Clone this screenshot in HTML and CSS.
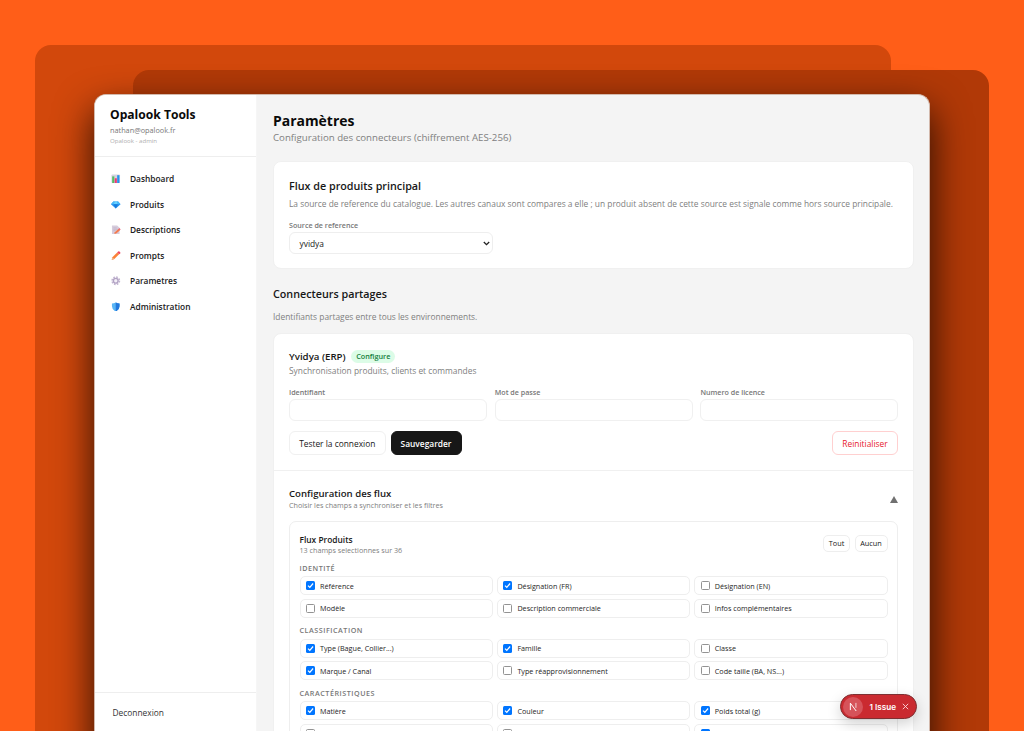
FILE: index.html
```html
<!DOCTYPE html>
<html lang="fr">
<head>
<meta charset="utf-8">
<title>Opalook Tools</title>
<link rel="stylesheet" href="styles.css">
</head>
<body>
<div class="stage">
  <div class="layer layer-back"></div>
  <div class="layer layer-mid"></div>
  <div class="window">
    <aside class="sidebar">
      <header class="brand">
        <div class="brand-name"><span>Opalook Tools</span></div>
        <div class="brand-mail"><span>nathan@opalook.fr</span></div>
        <div class="brand-role"><span>Opalook - admin</span></div>
      </header>
      <nav class="nav">
        <a class="nav-item"><svg class="emoji" viewBox="0 0 20 20"><rect x="1" y="1" width="18" height="18" rx="2" fill="#d5d3e0"/><rect x="2.5" y="5" width="4.5" height="14" fill="#58bd63"/><rect x="7.8" y="9" width="4.5" height="10" fill="#ec3975"/><rect x="13" y="2.5" width="4.8" height="16.5" fill="#2692ed"/></svg><span>Dashboard</span></a>
        <a class="nav-item"><svg class="emoji" viewBox="0 0 20 20"><path d="M5 3h10l5 6-10 9L0 9z" fill="#2491ee"/><path d="M5 3 0 9h5.5L8 3zM12 3l2.500 6H20l-5-6z" fill="#47b9fb"/><path d="M8 3h4l2.500 6h-9z" fill="#65d2ff"/><path d="m5.500 9 4.500 9 4.500-9z" fill="#167bdc"/></svg><span>Produits</span></a>
        <a class="nav-item"><svg class="emoji" viewBox="0 0 20 20"><path d="M2 1h11l5 5v13H2z" fill="#d6ccdc"/><path d="M5 6h7M5 9h9M5 12h5" stroke="#b9acc2" stroke-width="1.200"/><path d="m8 15 8-7 3 3-8 7-4 1z" fill="#f47b50"/><path d="m16 8 3 3 1-2-2-2z" fill="#e73e5d"/></svg><span>Descriptions</span></a>
        <a class="nav-item"><svg class="emoji" viewBox="0 0 20 20"><path d="m3 13 10-10 4 4L7 17l-5 2z" fill="#fb8238"/><path d="m13 3 2-2q2-1 4 1t0 4l-2 1z" fill="#ee4863"/><path d="m3 13-2 6 6-2z" fill="#efb98d"/></svg><span>Prompts</span></a>
        <a class="nav-item"><svg class="emoji" viewBox="0 0 20 20"><circle cx="10" cy="10" r="7.800" fill="none" stroke="#c1b4d0" stroke-width="3.200" stroke-dasharray="3.500 2.627"/><circle cx="10" cy="10" r="5" fill="#f3eff7" stroke="#b2a3c4" stroke-width="3"/></svg><span>Parametres</span></a>
        <a class="nav-item"><svg class="emoji" viewBox="0 0 20 20"><path d="M10 1q4 2 8 2v6q0 7-8 11-8-4-8-11V3q4 0 8-2z" fill="#59b5f5"/><path d="M10 1q4 2 8 2v6q0 7-8 11z" fill="#2378dc"/></svg><span>Administration</span></a>
      </nav>
      <footer class="logout"><span>Deconnexion</span></footer>
    </aside>
    <main class="main">
      <h1 class="title"><span>Paramètres</span></h1>
      <p class="subtitle"><span>Configuration des connecteurs (chiffrement AES-256)</span></p>

      <section class="card source-card">
        <h2 class="h2"><span>Flux de produits principal</span></h2>
        <p class="source-text"><span>La source de reference du catalogue. Les autres canaux sont compares a elle ; un produit absent de cette source est signale comme hors source principale.</span></p>
        <div class="label"><span>Source de reference</span></div>
        <div class="select"><span>yvidya</span><svg class="chevron" viewBox="0 0 7 5"><path d="m.8 1 2.700 2.700L6.200 1" fill="none" stroke="#222" stroke-width="1.300"/></svg></div>
      </section>

      <h2 class="h2 shared-title"><span>Connecteurs partages</span></h2>
      <p class="shared-text"><span>Identifiants partages entre tous les environnements.</span></p>

      <section class="card connector">
        <div class="connector-body">
          <div class="connector-head"><h3 class="h3"><span>Yvidya (ERP)</span></h3><span class="badge"><span>Configure</span></span></div>
          <p class="connector-text"><span>Synchronisation produits, clients et commandes</span></p>
          <div class="fields">
            <div><div class="label"><span>Identifiant</span></div><div class="input"></div></div>
            <div><div class="label"><span>Mot de passe</span></div><div class="input"></div></div>
            <div><div class="label"><span>Numero de licence</span></div><div class="input"></div></div>
          </div>
          <div class="actions">
            <div class="btn btn-test"><span>Tester la connexion</span></div>
            <div class="btn btn-save"><span>Sauvegarder</span></div>
            <div class="btn btn-reset"><span>Reinitialiser</span></div>
          </div>
        </div>
        <div class="flux">
          <div class="flux-head">
            <div><h3 class="h3"><span>Configuration des flux</span></h3><p class="small"><span>Choisir les champs a synchroniser et les filtres</span></p></div>
            <svg class="triangle" viewBox="0 0 8 7"><path d="M4 0l4 7H0z" fill="#707070"/></svg>
          </div>
          <div class="panel">
            <div class="panel-head">
              <div><h4 class="h4"><span>Flux Produits</span></h4><p class="small count"><span>13 champs selectionnes sur 36</span></p></div>
              <div class="mini-group"><div class="mini mini-all"><span>Tout</span></div><div class="mini mini-none"><span>Aucun</span></div></div>
            </div>
            <div class="group-title g1"><span>IDENTITÉ</span></div>
            <div class="grid">
              <div class="opt"><i class="box on"><svg viewBox="0 0 9 9"><path d="m2 4.600 1.800 1.800L7.100 2.500"/></svg></i><span>Référence</span></div>
              <div class="opt"><i class="box on"><svg viewBox="0 0 9 9"><path d="m2 4.600 1.800 1.800L7.100 2.500"/></svg></i><span>Désignation (FR)</span></div>
              <div class="opt"><i class="box"></i><span>Désignation (EN)</span></div>
              <div class="opt"><i class="box"></i><span>Modèle</span></div>
              <div class="opt"><i class="box"></i><span>Description commerciale</span></div>
              <div class="opt"><i class="box"></i><span>Infos complémentaires</span></div>
            </div>
            <div class="group-title g2"><span>CLASSIFICATION</span></div>
            <div class="grid">
              <div class="opt"><i class="box on"><svg viewBox="0 0 9 9"><path d="m2 4.600 1.800 1.800L7.100 2.500"/></svg></i><span>Type (Bague, Collier...)</span></div>
              <div class="opt"><i class="box on"><svg viewBox="0 0 9 9"><path d="m2 4.600 1.800 1.800L7.100 2.500"/></svg></i><span>Famille</span></div>
              <div class="opt"><i class="box"></i><span>Classe</span></div>
              <div class="opt"><i class="box on"><svg viewBox="0 0 9 9"><path d="m2 4.600 1.800 1.800L7.100 2.500"/></svg></i><span>Marque / Canal</span></div>
              <div class="opt"><i class="box"></i><span>Type réapprovisionnement</span></div>
              <div class="opt"><i class="box"></i><span>Code taille (BA, NS...)</span></div>
            </div>
            <div class="group-title g3"><span>CARACTÉRISTIQUES</span></div>
            <div class="grid">
              <div class="opt"><i class="box on"><svg viewBox="0 0 9 9"><path d="m2 4.600 1.800 1.800L7.100 2.500"/></svg></i><span>Matière</span></div>
              <div class="opt"><i class="box on"><svg viewBox="0 0 9 9"><path d="m2 4.600 1.800 1.800L7.100 2.500"/></svg></i><span>Couleur</span></div>
              <div class="opt"><i class="box on"><svg viewBox="0 0 9 9"><path d="m2 4.600 1.800 1.800L7.100 2.500"/></svg></i><span>Poids total (g)</span></div>
              <div class="opt"><i class="box"></i></div>
              <div class="opt"><i class="box"></i></div>
              <div class="opt"><i class="box on"></i></div>
            </div>
          </div>
        </div>
      </section>
    </main>
  </div>
  <div class="issue">
    <div class="issue-logo"><svg viewBox="0 0 10 10"><path d="M1.500 9V1.300L8 10" fill="none" stroke="#fff" stroke-width="1.100"/><path d="M7.700 1v5.500" stroke="#fff" stroke-width="1.100" opacity=".75"/></svg></div>
    <span class="issue-text">1 Issue</span>
    <svg class="issue-close" viewBox="0 0 7 7"><path d="m.8.8 5.400 5.400M6.200.8.8 6.200" stroke="#fbdadd" stroke-width=".9"/></svg>
  </div>
</div>
</body>
</html>
```
FILE: styles.css
```css
* { box-sizing: border-box; }
body { margin: 0; font-family: "Open Sans", "Noto Sans", sans-serif; color: #171717; }
h1, h2, h3, h4, p { margin: 0; }
span { white-space: nowrap; }

.stage { position: relative; width: 1024px; height: 731px; overflow: hidden; background: #ff5e18; padding: 94px 94px 0 94px; }
.layer { position: absolute; border-radius: 16px 16px 0 0; }
.layer-back { left: 35px; top: 45px; width: 856px; height: 700px; background: #d2480c; }
.layer-mid { left: 133px; top: 70px; width: 856px; height: 680px; background: #b13907; }

.window { position: relative; display: flex; width: 836px; height: 760px; border-radius: 12px 12px 0 0; overflow: hidden; background: #f4f4f4; border: 1px solid #d3b9ac; border-bottom: 0; box-shadow: 0 16px 38px rgba(0, 0, 0, .82); }

/* Sidebar */
.sidebar { width: 162px; height: 636px; flex: none; background: #fff; border-right: 1px solid #f6f6f6; display: flex; flex-direction: column; }
.brand { height: 62px; padding: 11px 0 0 15px; border-bottom: 1px solid #eee; }
.brand-name { font-size: 12.100px; line-height: 17px; font-weight: 700; color: #0a0a0a; }
.brand-mail { font-size: 7.300px; line-height: 12px; margin-top: 1px; color: #777; }
.brand-role { font-size: 6.100px; line-height: 10px; margin-top: 0; color: #b0b0b0; }
.nav { flex: 1; padding-top: 9px; }
.nav-item { display: flex; align-items: center; height: 25.500px; padding-left: 16px; gap: 9.500px; font-size: 8.350px; font-weight: 600; color: #202020; }
.emoji { width: 9.500px; height: 9.500px; flex: none; }
.logout { height: 39px; border-top: 1px solid #eee; padding: 13px 0 0 17.500px; font-size: 8.400px; line-height: 14px; color: #333; }

/* Main column */
.main { width: 657px; padding: 16px 0 0 16px; }
.title { font-size: 13.950px; line-height: 20px; font-weight: 700; color: #0a0a0a; }
.subtitle { font-size: 9.680px; line-height: 14px; color: #808080; }
.card { width: 641px; background: #fff; border: 1px solid #f0f0f0; border-radius: 8px; }
.source-card { height: 108px; margin-top: 16px; padding: 16px 15px; }
.h2 { font-size: 10.750px; line-height: 16px; font-weight: 600; }
.source-text { font-size: 8.400px; line-height: 14px; margin-top: 3px; color: #808080; }
.label { font-size: 7.150px; line-height: 10px; font-weight: 600; color: #777; }
.source-card .label { margin-top: 9px; }
.select { display: flex; align-items: center; justify-content: space-between; width: 204px; height: 22px; margin-top: 2px; padding: 0 2px 0 9.500px; border: 1px solid #eee; border-radius: 6px; font-size: 8.400px; }
.chevron { width: 7px; height: 5px; }
.shared-title { margin-top: 17px; }
.shared-text { font-size: 8.400px; line-height: 14px; margin-top: 8px; color: #808080; }

.connector { height: 440px; margin-top: 9px; border-radius: 8px 8px 0 0; }
.connector-body { height: 137px; padding: 16px 15px 0; border-bottom: 1px solid #f0f0f0; }
.connector-head { display: flex; align-items: center; height: 13px; gap: 5.500px; }
.h3 { font-size: 9.700px; line-height: 13px; font-weight: 600; }
.badge { height: 13px; padding: 0 5px; border-radius: 7px; background: #dcfce7; color: #15803d; font-size: 7.250px; line-height: 13px; font-weight: 600; }
.connector-text { font-size: 8.400px; line-height: 13px; margin-top: 1px; color: #808080; }
.fields { display: grid; grid-template-columns: repeat(3, 198px); gap: 7.700px; margin-top: 10px; }
.input { height: 21.500px; margin-top: 2px; border: 1px solid #f0f0f0; border-radius: 6px; }
.actions { display: flex; align-items: center; gap: 5px; margin-top: 10px; }
.btn { display: flex; align-items: center; justify-content: center; height: 24px; border: 1px solid #f0f0f0; border-radius: 6px; font-size: 8.400px; padding-top: 1px; }
.btn-test { width: 96.500px; }
.btn-save { width: 71px; background: #171717; border-color: #171717; color: #fff; font-weight: 600; }
.btn-reset { width: 66px; margin-left: auto; color: #e7202b; border-color: #ffd0d0; }

/* Flux configuration */
.flux { padding: 15.500px 15px 0; }
.flux-head { display: flex; align-items: center; justify-content: space-between; height: 25.500px; }
.flux-head .h3 { font-size: 9.600px; }
.small { font-size: 7.200px; line-height: 11px; color: #808080; }
.triangle { width: 8px; height: 7px; }
.panel { height: 250px; margin-top: 9px; padding: 11.500px 9.500px 0; border: 1px solid #eee; border-radius: 7px 7px 0 0; }
.panel-head { display: flex; justify-content: space-between; height: 23px; }
.h4 { font-size: 8.400px; line-height: 12px; font-weight: 600; }
.count { margin-top: -.500px; }
.mini-group { display: flex; gap: 4.500px; padding-top: 1px; }
.mini { display: flex; align-items: center; justify-content: center; height: 17px; border: 1px solid #eee; border-radius: 5px; font-size: 7.300px; }
.mini-all { width: 27px; }
.mini-none { width: 33px; }
.group-title { font-size: 7.200px; line-height: 10px; font-weight: 600; color: #777; margin-top: 7.500px; letter-spacing: .52px; }
.g1 { margin-top: 6px; }
.grid { display: grid; grid-template-columns: repeat(3, 193.500px); column-gap: 3.900px; row-gap: 3.500px; margin-top: 3.500px; }
.opt { display: flex; align-items: center; gap: 5px; height: 19px; padding-left: 5.500px; border: 1px solid #eee; border-radius: 5px; font-size: 7.200px; color: #262626; }
.box { width: 9px; height: 9px; flex: none; border: 1px solid #939393; border-radius: 1.500px; background: #fff; }
.box.on { border: 0; background: #0075ff; }
.box svg { display: block; width: 9px; height: 9px; fill: none; stroke: #fff; stroke-width: 1.200; }

/* Issue indicator floating above the window */
.issue { position: absolute; left: 840px; top: 694px; display: flex; align-items: center; width: 77px; height: 25px; padding-left: 2px; border-radius: 13px; background: #ca2a30; border: 1px solid #7e3032; box-shadow: 0 5px 14px rgba(0, 0, 0, .18); }
.issue-logo { display: flex; align-items: center; justify-content: center; width: 20px; height: 20px; border-radius: 50%; background: #d6535a; }
.issue-logo svg { width: 9px; height: 9px; }
.issue-text { margin-left: 6.500px; font-family: Inter, sans-serif; font-size: 8.200px; font-weight: 600; color: #fff; }
.issue-close { width: 7px; height: 7px; margin-left: 5.500px; }
```
